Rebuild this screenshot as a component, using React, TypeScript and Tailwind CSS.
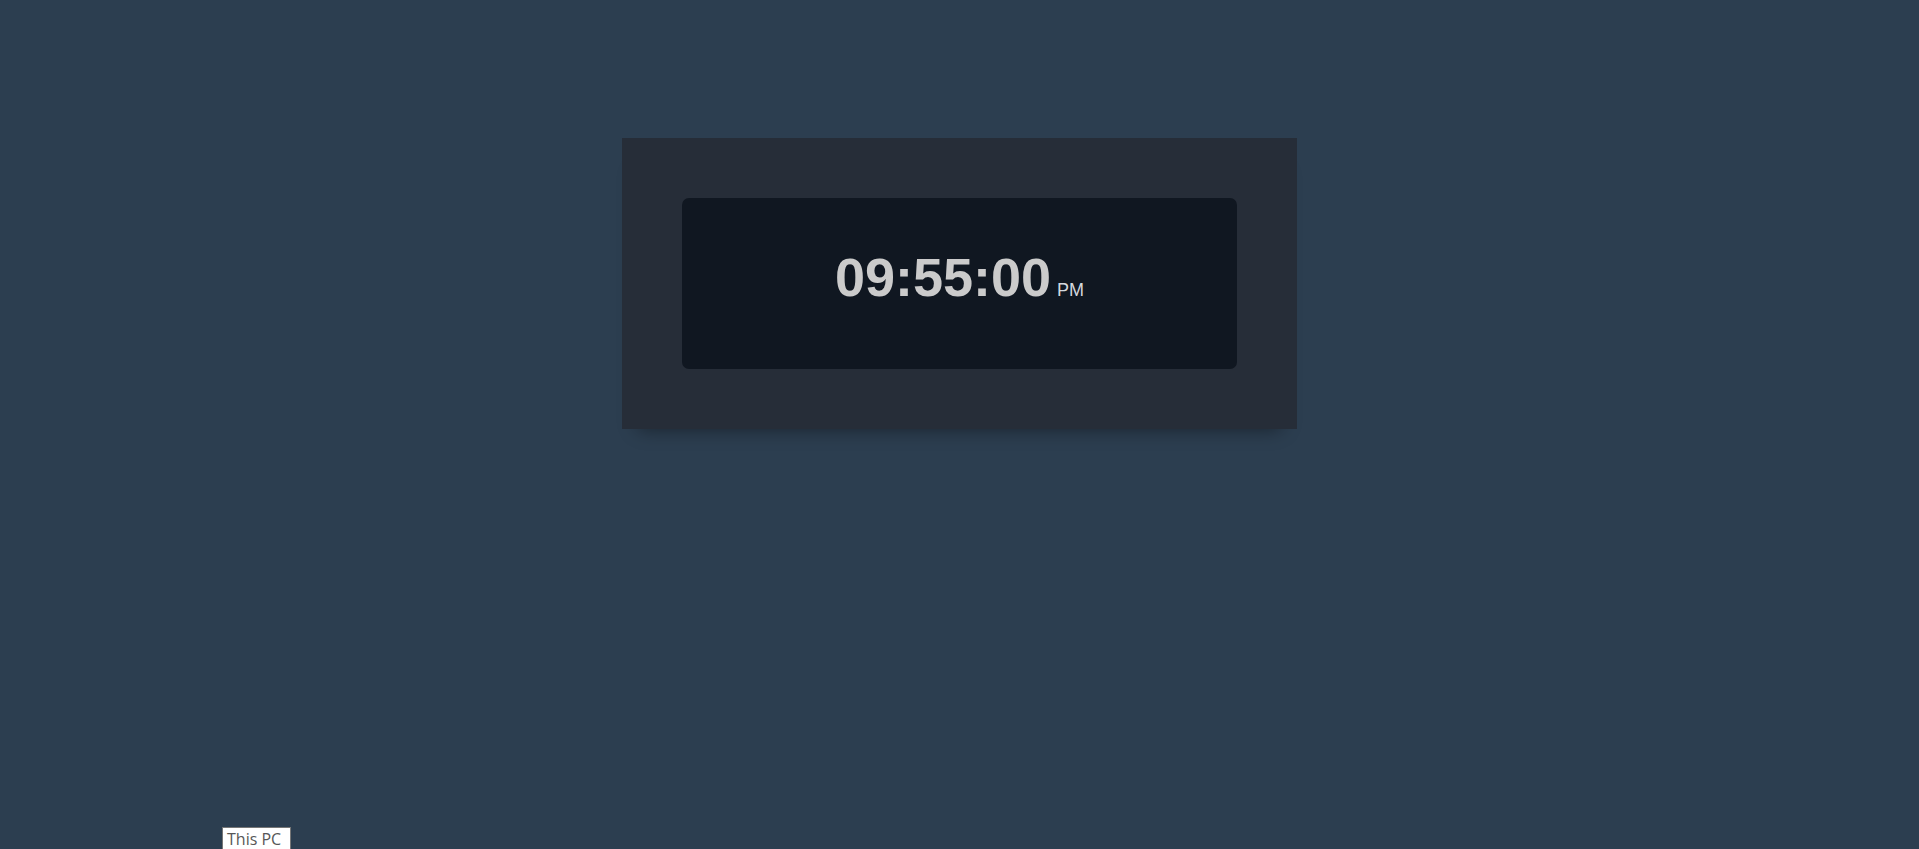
import React from "react";

export default function App() {
  return (
    <div className="relative min-h-screen w-full bg-[#2c3e50] flex justify-center pt-[138px] overflow-hidden">
      <div className="w-[675px] h-[291px] bg-[#262d38] p-[60px] shadow-[0_16px_18px_-16px_rgba(0,0,0,0.45)]">
        <div className="h-[171px] rounded-[7px] bg-[#101721] flex items-center justify-center">
          <div className="flex items-baseline pb-[14px]" style={{ fontFamily: '"Liberation Sans", Arial, sans-serif' }}>
            <span className="text-[54px] font-bold text-[#cbcbcb] leading-none">09:55:00</span>
            <span className="ml-[6px] text-[18px] text-[#d4d8de] leading-none">PM</span>
          </div>
        </div>
      </div>
      <div
        className="absolute left-[222px] top-[827px] h-[30px] border border-[#767676] bg-white pl-[4px] pr-[9px] pt-[1px] text-[16px] leading-[20px] text-[#575757]"
        style={{ fontFamily: '"Open Sans", "Noto Sans", sans-serif' }}
      >
        This PC
      </div>
    </div>
  );
}
